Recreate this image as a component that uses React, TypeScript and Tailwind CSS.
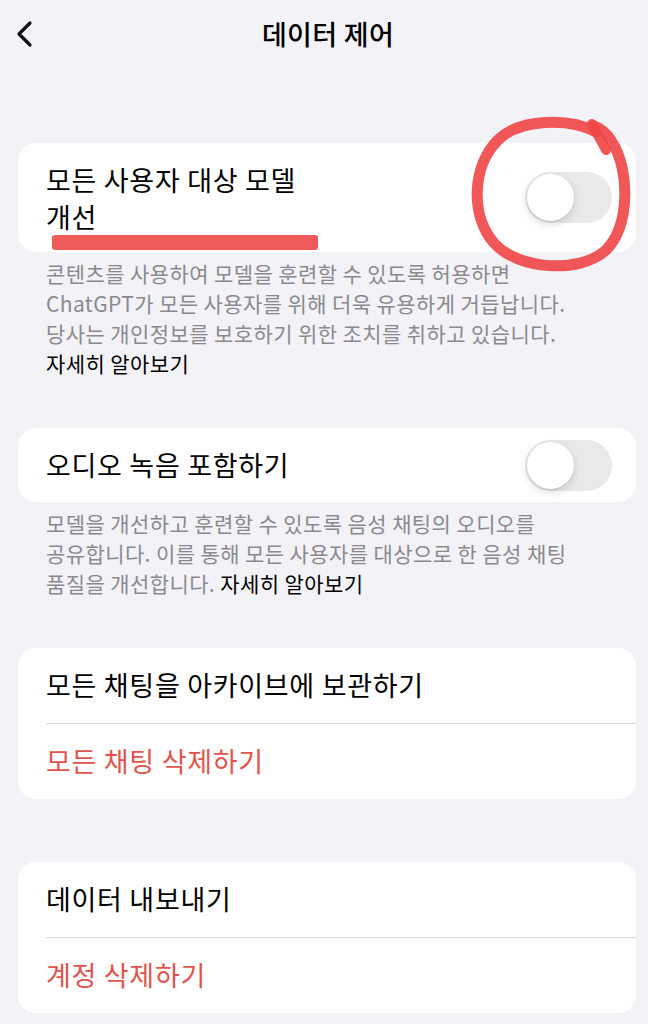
import React from "react";

const font = { fontFamily: '"Noto Sans CJK KR", "Noto Sans", sans-serif' };

function Toggle() {
  return (
    <div className="relative h-[51px] w-[87px] shrink-0 rounded-full bg-[#e9e9eb]">
      <div className="absolute left-[2px] top-[2px] h-[47px] w-[47px] rounded-full bg-white shadow-[0_3px_8px_rgba(0,0,0,0.15),0_1px_1px_rgba(0,0,0,0.08)]" />
    </div>
  );
}

export default function App() {
  return (
    <div
      className="relative min-h-[1024px] w-[648px] overflow-hidden bg-[#f2f2f7] text-black"
      style={font}
    >
      {/* Header */}
      <div className="relative flex h-[68px] items-center justify-center pl-[8px]">
        <svg
          className="absolute left-[14px] top-[20px]"
          width="22"
          height="28"
          viewBox="0 0 22 28"
          fill="none"
        >
          <path
            d="M16 3 L5 14 L16 25"
            stroke="#111"
            strokeWidth="3.2"
            strokeLinecap="round"
            strokeLinejoin="round"
          />
        </svg>
        <div className="text-[27px] font-medium tracking-[0.3px]">데이터 제어</div>
      </div>

      <div className="pl-[18px] pr-[12px] pt-[75px]">
        {/* Card 1 */}
        <div className="flex h-[109px] items-center justify-between rounded-[18px] bg-white pl-[28px] pr-[24px]">
          <div className="text-[27px] leading-[37px] tracking-[0.7px]">
            모든 사용자 대상 모델
            <br />
            개선
          </div>
          <Toggle />
        </div>
        <div className="px-[28px] pt-[6px] text-[21px] leading-[30px] tracking-[0.4px] text-[#8a8a8e]">
          콘텐츠를 사용하여 모델을 훈련할 수 있도록 허용하면
          <br />
          ChatGPT가 모든 사용자를 위해 더욱 유용하게 거듭납니다.
          <br />
          당사는 개인정보를 보호하기 위한 조치를 취하고 있습니다.
          <br />
          <span className="text-black">자세히 알아보기</span>
        </div>

        {/* Card 2 */}
        <div className="mt-[50px] flex h-[74px] items-center justify-between rounded-[18px] bg-white pl-[28px] pr-[24px]">
          <div className="text-[27px] tracking-[0.7px]">오디오 녹음 포함하기</div>
          <Toggle />
        </div>
        <div className="px-[28px] pt-[6px] text-[21px] leading-[30px] tracking-[0.4px] text-[#8a8a8e]">
          모델을 개선하고 훈련할 수 있도록 음성 채팅의 오디오를
          <br />
          공유합니다. 이를 통해 모든 사용자를 대상으로 한 음성 채팅
          <br />
          품질을 개선합니다. <span className="text-black">자세히 알아보기</span>
        </div>

        {/* Card 3 */}
        <div className="mt-[50px] rounded-[18px] bg-white pl-[28px]">
          <div className="flex h-[75px] items-center text-[27px] tracking-[0.7px]">
            모든 채팅을 아카이브에 보관하기
          </div>
          <div className="h-px bg-[#dcdce0]" />
          <div className="flex h-[75px] items-center text-[27px] tracking-[0.7px] text-[#e0544d]">
            모든 채팅 삭제하기
          </div>
        </div>

        {/* Card 4 */}
        <div className="mt-[63px] rounded-[18px] bg-white pl-[28px]">
          <div className="flex h-[75px] items-center text-[27px] tracking-[0.7px]">
            데이터 내보내기
          </div>
          <div className="h-px bg-[#dcdce0]" />
          <div className="flex h-[75px] items-center text-[27px] tracking-[0.7px] text-[#e0544d]">
            계정 삭제하기
          </div>
        </div>
      </div>

      {/* Red annotation marks */}
      <svg
        className="pointer-events-none absolute left-0 top-0"
        width="648"
        height="300"
        viewBox="0 0 648 300"
        fill="none"
      >
        <rect x="52" y="235" width="266" height="15" rx="3" fill="#f04848" opacity="0.9" />
        <path
          d="M596 132 C570 118 520 118 498 140 C472 166 470 215 494 243 C518 270 580 274 606 250 C630 226 630 170 612 142 C606 132 600 128 594 126"
          stroke="#f04545"
          strokeWidth="11"
          strokeLinecap="round"
          opacity="0.9"
        />
        <path d="M592 124 L606 150" stroke="#f04545" strokeWidth="10" strokeLinecap="round" opacity="0.9" />
      </svg>
    </div>
  );
}
